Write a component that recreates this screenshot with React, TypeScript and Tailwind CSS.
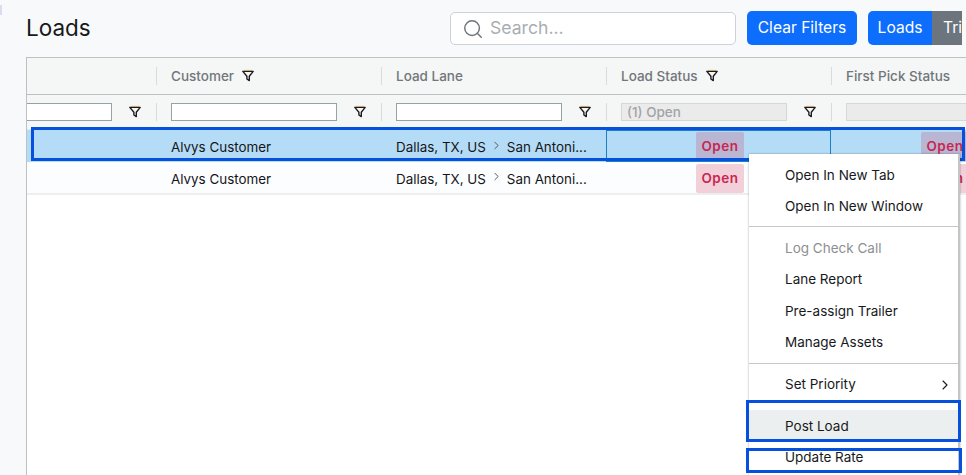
import { ChevronRight, Search } from "lucide-react";

const font = "font-['Inter','Liberation_Sans',sans-serif]";

const columns = [
  { name: "", width: "w-[129px]", first: true },
  { name: "Customer", width: "w-[225px]", hasFilter: true },
  { name: "Load Lane", width: "w-[225px]" },
  { name: "Load Status", width: "w-[225px]", hasFilter: true, value: "(1) Open" },
  { name: "First Pick Status", width: "w-[225px]", disabled: true },
];

function FunnelIcon() {
  return (
    <svg viewBox="0 0 14 14" className="h-[14px] w-[14px] shrink-0" fill="none">
      <path d="M1.8 2.4h10.4L8.3 7.2v4.4L5.9 10V7.2z" stroke="#1b1b1f" strokeWidth="1.4" strokeLinejoin="round" />
      <path d="M2.8 1.4h8.4" stroke="#c98a2c" strokeWidth="0.6" />
    </svg>
  );
}

function StatusBadge({ inBorder }: { inBorder?: boolean }) {
  return (
    <span className={`absolute flex h-[29px] w-[48px] items-center justify-center rounded-[2px] bg-[#cc1f4a]/20 text-[13.5px] font-semibold tracking-[0.5px] text-[#c9264f] ${inBorder ? "left-[89px] top-[1px]" : "left-[90px] top-[2px]"}`}>
      Open
    </span>
  );
}

function Row({ selected }: { selected?: boolean }) {
  return (
    <div className={`flex shrink-0 items-center text-[13.4px] text-[#14161a] ${selected ? "h-[32px] bg-[#b5dcf6]" : "h-[31px] bg-[#fcfdfe]"}`}>
      <div className="w-[129px] shrink-0" />
      <div className="w-[225px] shrink-0 pl-[15px] pt-[3px]">Alvys Customer</div>
      <div className="flex w-[225px] shrink-0 items-center pl-[15px] pt-[3px]">
        Dallas, TX, US
        <ChevronRight className="mx-[4px] mb-[4px] h-[13px] w-[13px] text-[#444]" strokeWidth={1.6} />
        San Antoni...
      </div>
      <div className={`relative h-full w-[225px] shrink-0 ${selected ? "border border-[#1a7fc4]" : ""}`}>
        <StatusBadge inBorder={selected} />
      </div>
      <div className="relative h-full w-[225px] shrink-0">
        <StatusBadge />
      </div>
    </div>
  );
}

function MenuItem({ label, muted, active, arrow }: { label: string; muted?: boolean; active?: boolean; arrow?: boolean }) {
  return (
    <div className={`flex h-[31.4px] items-center justify-between pl-[36px] pr-[5px] text-[13.5px] ${muted ? "text-[#8d8f92]" : "text-[#17191c]"} ${active ? "bg-[#ecefef]" : ""}`}>
      {label}
      {arrow && <ChevronRight className="h-[16px] w-[16px]" strokeWidth={1.6} />}
    </div>
  );
}

export default function App() {
  return (
    <div className={`relative h-[475px] w-[966px] overflow-hidden bg-[#f8f9fa] ${font}`}>
      <div className="absolute left-0 top-[5px] h-[10px] w-[2px] bg-[#dcdcf0]" />

      <div className="flex h-[57px] items-start pl-[26px]">
        <h1 className="mt-[13px] w-[424px] shrink-0 text-[22.5px] leading-[30px] text-[#17191c]">Loads</h1>
        <div className="mt-[12px] flex h-[33px] w-[286px] shrink-0 items-center gap-[6px] rounded-[5px] border border-[#ced0da] bg-white pl-[11px]">
          <Search className="h-[22px] w-[22px] text-[#70757a]" strokeWidth={1.6} />
          <span className="text-[17.6px] text-[#a9adb3]">Search...</span>
        </div>
        <button className="ml-[11px] mt-[11px] h-[34px] w-[110px] shrink-0 rounded-[5px] bg-[#0d6efd] text-[15.6px] text-white">Clear Filters</button>
        <div className="ml-[11px] mt-[11px] flex h-[34px] w-[94px] shrink-0 overflow-hidden rounded-l-[5px]">
          <button className="h-full w-[64px] shrink-0 bg-[#0d6efd] text-[15.6px] text-white">Loads</button>
          <button className="h-full w-[60px] shrink-0 bg-[#6c757d] pl-[11px] text-left text-[15.6px] text-white">Trips</button>
        </div>
      </div>

      <div className="ml-[26px] h-[418px] border-l border-t border-[#bcc1c4] bg-white">
        <div className="flex h-[37px] items-center border-b border-[#bcc1c4] bg-[#f5f7f7]">
          {columns.map((col) => (
            <div key={col.name} className={`flex h-[18px] shrink-0 items-center gap-[7px] pl-[14px] text-[13.5px] font-medium text-[#72767a] ${col.width} ${col.first ? "" : "border-l border-[#d9dcde]"}`}>
              <span className="pt-[1px]">{col.name}</span>
              {col.hasFilter && <FunnelIcon />}
            </div>
          ))}
        </div>
        <div className="flex h-[34px] items-center bg-[#f5f7f7]">
          {columns.map((col) => (
            <div key={col.name} className={`flex h-[18px] shrink-0 items-center ${col.width} ${col.first ? "" : "border-l border-[#d9dcde] pl-[14px]"}`}>
              <div className={`flex h-[18px] ${col.first ? "w-[85px] border-l-0" : "w-[166px]"} shrink-0 items-center border px-[5px] text-[13.5px] font-medium text-[#a2a4a6] ${col.value || col.disabled ? "border-[#d5d7d8] bg-[#ebebeb]" : "border-[#96a3a6] bg-white"}`}>
                {col.value}
              </div>
              <div className="ml-[16px]"><FunnelIcon /></div>
            </div>
          ))}
        </div>
        <div className="h-[1px] bg-[#e8eaeb]" />
        <Row selected />
        <Row />
        <div className="h-[2px] bg-[#eceeef]" />
      </div>

      {/* blue callouts drawn over the grid */}
      <div className="absolute left-[31px] top-[127px] h-[34px] w-[934px] border-[3px] border-[#0550dc]" />

      <div className="absolute left-[749px] top-[154px] h-[321px] w-[211px] border-r-2 border-[#c2c4c6] bg-white pt-[5.5px] shadow-[0_0_2px_rgba(0,0,0,0.35)]">
        <MenuItem label="Open In New Tab" />
        <MenuItem label="Open In New Window" />
        <div className="mb-[5px] mt-[4px] h-[1px] bg-[#c5c8ca]" />
        <MenuItem label="Log Check Call" muted />
        <MenuItem label="Lane Report" />
        <MenuItem label="Pre-assign Trailer" />
        <MenuItem label="Manage Assets" />
        <div className="my-[5px] h-[1px] bg-[#c5c8ca]" />
        <MenuItem label="Set Priority" arrow />
        <div className="h-[10px]" />
        <MenuItem label="Post Load" active />
        <MenuItem label="Update Rate" />
      </div>

      <div className="absolute left-[746px] top-[400px] h-[42px] w-[215px] border-[3px] border-[#0550dc]" />
      <div className="absolute left-[746px] top-[448px] h-[25px] w-[216px] border-[3px] border-[#0550dc]" />
    </div>
  );
}
